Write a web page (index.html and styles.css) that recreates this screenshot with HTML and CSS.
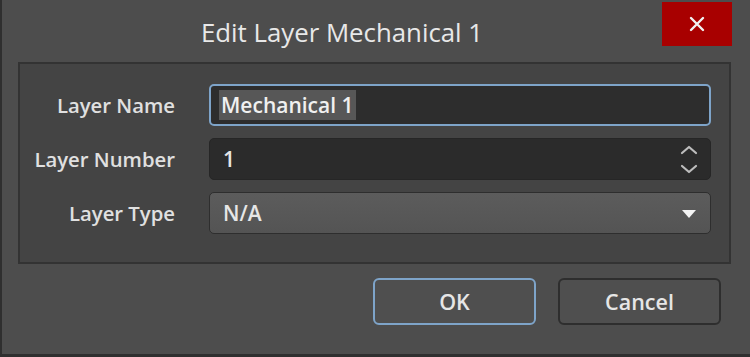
FILE: index.html
```html
<!DOCTYPE html>
<html lang="en">
<head>
  <meta charset="UTF-8">
  <meta name="viewport" content="width=device-width, initial-scale=1.0">
  <title>Edit Layer Mechanical 1</title>
  <link rel="stylesheet" href="styles.css">
</head>
<body>
  <div class="dialog">
    <div class="titlebar">
      <div class="title">Edit Layer Mechanical 1</div>
      <button class="close-btn" aria-label="Close">
        <svg width="16" height="16" viewBox="0 0 16 16">
          <path d="M2 2 L14 14 M14 2 L2 14" stroke="#f2f2f2" stroke-width="2.4" stroke-linecap="round"/>
        </svg>
      </button>
    </div>

    <div class="panel">
      <div class="row">
        <label class="label" for="layerName">Layer Name</label>
        <div class="field field-focus">
          <span class="selected">Mechanical 1</span>
        </div>
      </div>

      <div class="row">
        <label class="label" for="layerNumber">Layer Number</label>
        <div class="field field-dark">
          <span>1</span>
          <div class="spinner">
            <svg width="18" height="10" viewBox="0 0 18 10">
              <path d="M2 8 L9 2 L16 8" fill="none" stroke="#bdbdbd" stroke-width="2.2" stroke-linecap="round" stroke-linejoin="round"/>
            </svg>
            <svg width="18" height="10" viewBox="0 0 18 10">
              <path d="M2 2 L9 8 L16 2" fill="none" stroke="#bdbdbd" stroke-width="2.2" stroke-linecap="round" stroke-linejoin="round"/>
            </svg>
          </div>
        </div>
      </div>

      <div class="row">
        <label class="label" for="layerType">Layer Type</label>
        <div class="field field-combo">
          <span>N/A</span>
          <svg class="caret" width="16" height="10" viewBox="0 0 16 10">
            <path d="M1 1 L15 1 L8 9 Z" fill="#f4f4f4"/>
          </svg>
        </div>
      </div>
    </div>

    <div class="footer">
      <button class="btn btn-default">OK</button>
      <button class="btn">Cancel</button>
    </div>
  </div>
</body>
</html>
```

FILE: styles.css
```css
html, body {
  margin: 0;
  padding: 0;
  background: #4d4d4d;
}
body {
  font-family: "Open Sans", "Noto Sans", sans-serif;
  color: #e4e4e4;
}
.dialog {
  box-sizing: border-box;
  width: 750px;
  height: 357px;
  background: #4d4d4d;
  border-left: 2px solid #2f2f2f;
  border-bottom: 3px solid #2f2f2f;
  display: flex;
  flex-direction: column;
}
.titlebar {
  height: 62px;
  display: flex;
  align-items: flex-start;
}
.title {
  flex: 1;
  text-align: center;
  font-size: 25.8px;
  font-weight: 500;
  line-height: 64px;
  padding-left: 20px;
  color: #e8e8e8;
}
.close-btn {
  margin-top: 2px;
  margin-right: 18px;
  width: 70px;
  height: 44px;
  border: none;
  background: #a80000;
  display: flex;
  align-items: center;
  justify-content: center;
  padding: 0;
}
.panel {
  margin: 0 19px 0 16px;
  height: 202px;
  box-sizing: border-box;
  background: #444444;
  border: 2px solid #333333;
  padding: 20px 18px 0 0;
  display: flex;
  flex-direction: column;
  gap: 12px;
}
.row {
  display: flex;
  align-items: center;
  height: 42px;
}
.label {
  width: 155px;
  text-align: right;
  font-size: 20.3px;
  font-weight: 600;
  color: #e0e0e0;
  margin-right: 34px;
}
.field {
  flex: 1;
  height: 42px;
  box-sizing: border-box;
  border-radius: 5px;
  display: flex;
  align-items: center;
  padding: 0 12px 0 13px;
  font-size: 21px;
  font-weight: 600;
  color: #e6e6e6;
}
.field-focus {
  background: #2d2d2d;
  border: 2px solid #7ea4c9;
  padding-left: 8px;
}
.selected {
  background: #575757;
  padding: 1px 2px;
  color: #f0f0f0;
}
.field-dark {
  background: #2b2b2b;
  border: 1px solid #262626;
  justify-content: space-between;
}
.spinner {
  display: flex;
  flex-direction: column;
  gap: 9px;
  margin-right: 0;
}
.field-combo {
  background: linear-gradient(#5c5c5c, #545454);
  border: 1px solid #2e2e2e;
  justify-content: space-between;
}
.caret {
  margin-right: 1px;
  margin-top: 2px;
}
.footer {
  display: flex;
  justify-content: flex-end;
  gap: 22px;
  padding: 14px 29px 0 0;
}
.btn {
  width: 163px;
  height: 47px;
  border-radius: 6px;
  background: #4f4f4f;
  border: 2px solid #2e2e2e;
  color: #e6e6e6;
  font-family: "Open Sans", "Noto Sans", sans-serif;
  font-size: 21.5px;
  font-weight: 600;
}
.btn-default {
  border-color: #7ea4c9;
}
```
